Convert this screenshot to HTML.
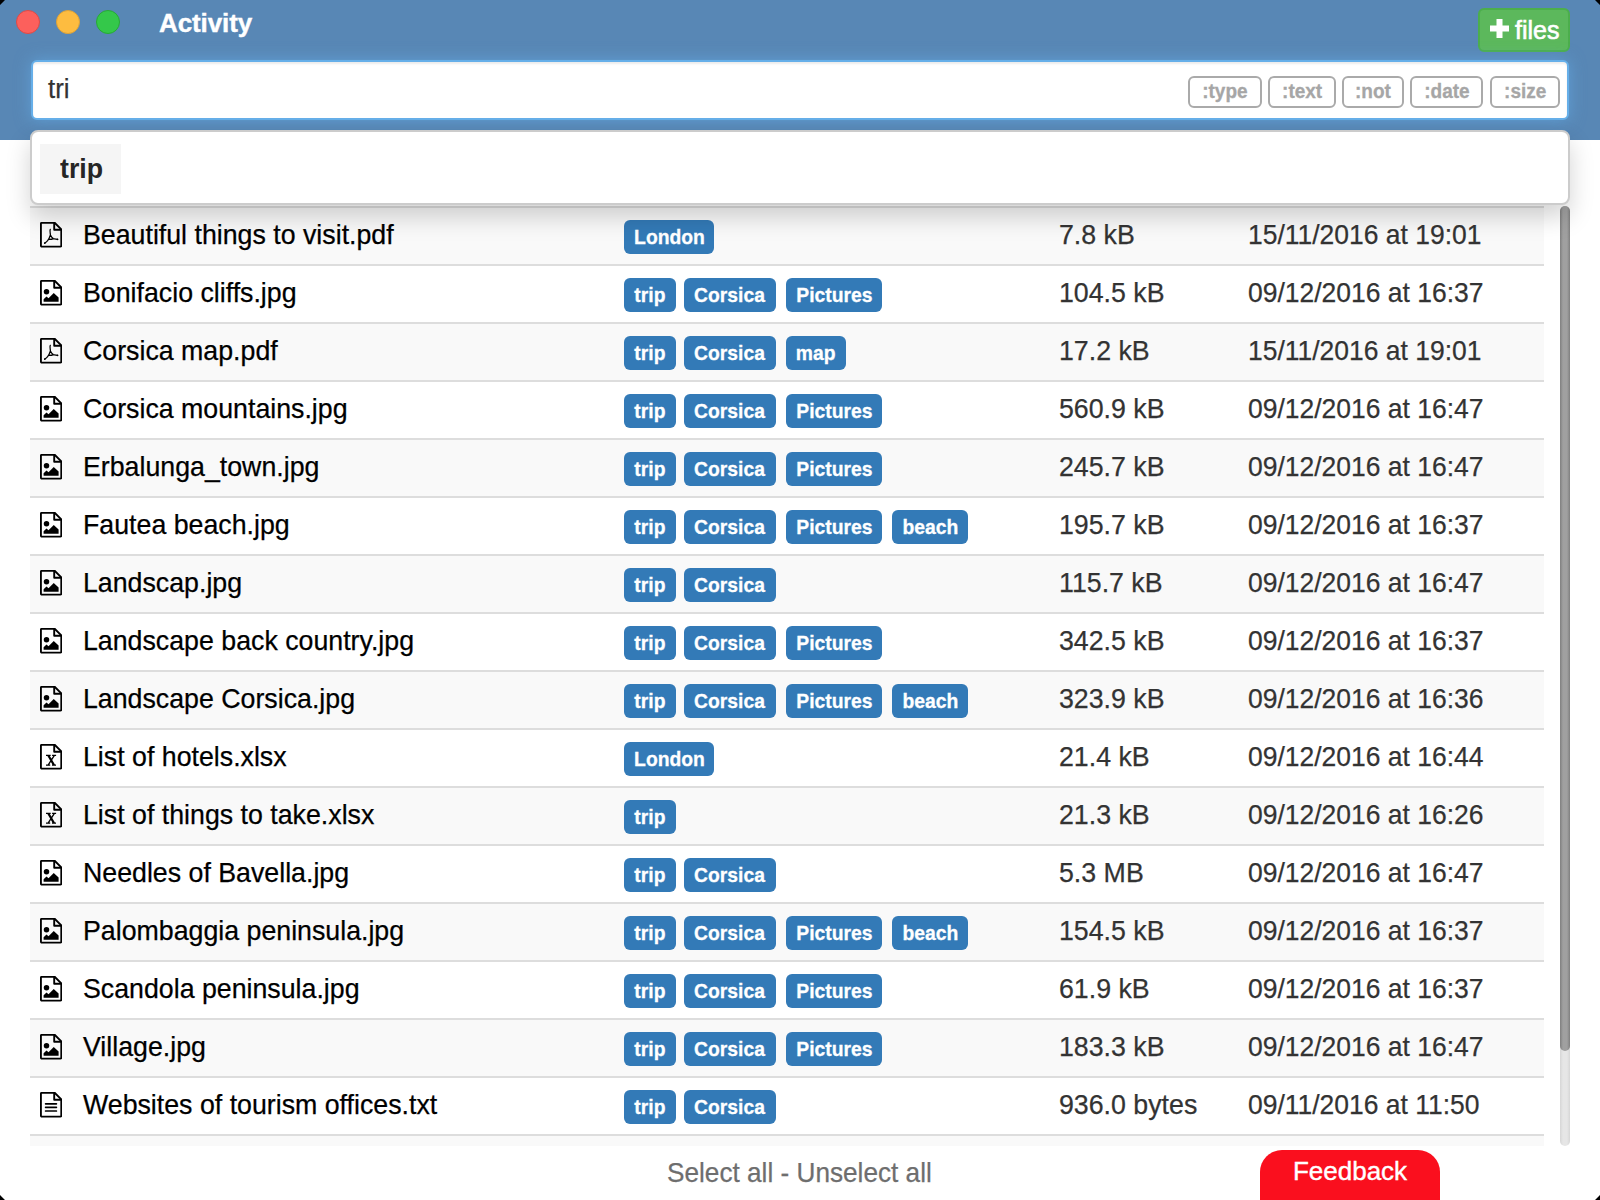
<!DOCTYPE html>
<html><head><meta charset="utf-8"><title>Activity</title>
<style>
html,body{margin:0;padding:0;}
body{width:1600px;height:1200px;overflow:hidden;position:relative;background:#fff;font-family:"Liberation Sans",sans-serif;color:#333;}
.header{position:absolute;left:0;top:0;width:1600px;height:140px;background:#5887b5;}
.tl{position:absolute;top:10px;width:22px;height:22px;border-radius:50%;border:1px solid;}
.title{position:absolute;left:159px;top:6px;font-size:26px;font-weight:bold;color:#fff;line-height:34px;-webkit-text-stroke:0.4px #fff;letter-spacing:-0.1px;}
.addbtn{position:absolute;left:1478px;top:8px;width:88px;height:40px;border:2px solid #4cae4c;background:#5cb85c;border-radius:6px;color:#fff;}
.addbtn .plus{position:absolute;left:9.5px;top:8.5px;width:19px;height:19px;}
.addbtn .files{position:absolute;left:35px;top:5px;font-size:25px;line-height:30px;-webkit-text-stroke:0.6px #fff;}
.search{position:absolute;left:31px;top:60px;width:1534px;height:56px;background:#fff;border:2px solid #66afe9;border-radius:6px;box-shadow:inset 0 2px 2px rgba(0,0,0,.075),0 0 16px rgba(102,175,233,.6);}
.search .q{position:absolute;left:15px;top:12px;font-size:27px;line-height:30px;color:#333;}
.chip{position:absolute;top:14px;height:28px;border:2px solid #aaa;border-radius:6px;color:#a6a6a6;font-weight:bold;font-size:20px;line-height:26px;text-align:center;box-sizing:content-box;-webkit-text-stroke:0.3px #a6a6a6;}
.dropdown{position:absolute;left:30px;top:130px;width:1536px;height:71px;background:#fff;border:2px solid #ccc;border-radius:8px;box-shadow:0 12px 24px rgba(0,0,0,.175);z-index:5;}
.dropdown .item{position:absolute;left:8px;top:12px;width:81px;height:50px;background:#f5f5f5;}
.dropdown .item span{position:absolute;left:20px;top:10px;font-size:28px;font-weight:bold;color:#262626;line-height:30px;}
.row{position:absolute;left:30px;width:1514px;height:56px;border-top:2px solid #ddd;}
.footer i{font-style:normal;display:inline-block;transform:scaleX(.935);transform-origin:0 0;-webkit-text-stroke:0.25px currentColor;}
.date i{font-style:normal;display:inline-block;transform:scaleX(.945);transform-origin:0 0;}
.chip i{font-style:normal;display:inline-block;transform:scaleX(.95);}
.name i,.size i,.date i,.q i{-webkit-text-stroke:0.25px currentColor;}
.name i,.size i,.q i,.item i{font-style:normal;display:inline-block;transform:scaleX(.955);transform-origin:0 0;}
.ic{position:absolute;left:10px;top:14px;}
.name{position:absolute;left:53px;top:11px;font-size:28px;line-height:32px;color:#000;white-space:nowrap;}
.tags{position:absolute;left:594px;top:12px;height:34px;white-space:nowrap;font-size:0;}
.tag{position:absolute;top:0;height:34px;background:#337ab7;border-radius:6px;color:#fff;font-weight:bold;font-size:21px;line-height:34px;text-align:center;}
.tag i{font-style:normal;display:inline-block;transform:scaleX(.92);-webkit-text-stroke:0.3px #fff;}
.size{position:absolute;left:1029px;top:11px;font-size:28px;line-height:32px;white-space:nowrap;}
.date{position:absolute;left:1218px;top:11px;font-size:28px;line-height:32px;white-space:nowrap;}
.sb-track{position:absolute;left:1560px;top:206px;width:10px;height:940px;border-radius:5px;background:linear-gradient(90deg,#d6d6d6,#e6e6e6 30%,#e6e6e6 70%,#d6d6d6);}
.sb-thumb{position:absolute;left:1560px;top:206px;width:10px;height:845px;border-radius:5px;background:linear-gradient(90deg,#7f7f7f,#a0a0a0 30%,#a0a0a0 70%,#7f7f7f);}
.footer{position:absolute;left:667px;top:1155px;white-space:nowrap;font-size:28px;line-height:36px;color:#6e6e6e;}
.feedback{position:absolute;left:1260px;top:1150px;width:180px;height:70px;background:#fa0f1e;border-radius:22px 22px 0 0;color:#fff;font-size:26px;text-align:center;line-height:42px;-webkit-text-stroke:0.4px #fff;}
</style></head>
<body>
<div class="header">
  <div class="tl" style="left:16px;background:#fc605c;border-color:#de4a46"></div>
  <div class="tl" style="left:56px;background:#fdbc40;border-color:#dea236"></div>
  <div class="tl" style="left:96px;background:#34c84a;border-color:#27aa35"></div>
  <div class="title">Activity</div>
  <div class="addbtn"><svg class="plus" viewBox="0 0 19 19"><path d="M9.5,0 V19 M0,9.5 H19" stroke="#fff" stroke-width="6"/></svg><span class="files">files</span></div>
</div>
<div class="search">
  <div class="q"><i>tri</i></div>
  <div class="chip" style="left:1155px;width:70px"><i>:type</i></div>
  <div class="chip" style="left:1235px;width:64px"><i>:text</i></div>
  <div class="chip" style="left:1309px;width:58px"><i>:not</i></div>
  <div class="chip" style="left:1377px;width:69px"><i>:date</i></div>
  <div class="chip" style="left:1457px;width:66px"><i>:size</i></div>
</div>
<div class="dropdown"><div class="item"><span><i>trip</i></span></div></div>
<div class="table">
<div class="row" style="top:206px;background:#f9f9f9"><svg class="ic" width="22" height="26" viewBox="0 0 22 26"><path d="M1.9,0.75 H14.6 L21.3,7.4 V23.6 Q21.3,24.6 20.3,24.6 H1.9 Q0.9,24.6 0.9,23.6 V1.75 Q0.9,0.75 1.9,0.75 Z" fill="none" stroke="#000" stroke-width="1.9" stroke-linejoin="round"/><path d="M14.2,0.75 V7.8 H21.3" fill="none" stroke="#000" stroke-width="1.9" stroke-linejoin="round"/><path d="M10.3,7.3 C9.5,8.8 10.4,11 10.4,13 M10.4,13 C9.8,15 8.8,17.3 7.6,18.6 C6.6,19.8 5.5,20.6 4.7,21.2 M10.4,13 C11.2,14.6 12.2,16 13.4,16.6 C14.8,17.1 16.4,17 17.6,17.3 M8.6,17.3 C10,17.6 11.8,17.3 13.4,16.6" fill="none" stroke="#000" stroke-width="1.25" stroke-linecap="round"/><circle cx="17.5" cy="17.3" r="0.85" fill="#000"/><circle cx="4.8" cy="21.1" r="0.85" fill="#000"/></svg><div class="name"><i>Beautiful things to visit.pdf</i></div><div class="tags"><span class="tag" style="left:0px;width:90px"><i>London</i></span></div><div class="size"><i>7.8 kB</i></div><div class="date"><i>15/11/2016 at 19:01</i></div></div>
<div class="row" style="top:264px;background:#fff"><svg class="ic" width="22" height="26" viewBox="0 0 22 26"><path d="M1.9,0.75 H14.6 L21.3,7.4 V23.6 Q21.3,24.6 20.3,24.6 H1.9 Q0.9,24.6 0.9,23.6 V1.75 Q0.9,0.75 1.9,0.75 Z" fill="none" stroke="#000" stroke-width="1.9" stroke-linejoin="round"/><path d="M14.2,0.75 V7.8 H21.3" fill="none" stroke="#000" stroke-width="1.9" stroke-linejoin="round"/><circle cx="6.5" cy="11.75" r="2.75" fill="#000"/><path d="M3.6,21.75 V19.25 L6.5,16.5 L8.5,18.25 L13.75,13 L18.6,17.6 V21.75 Z" fill="#000"/></svg><div class="name"><i>Bonifacio cliffs.jpg</i></div><div class="tags"><span class="tag" style="left:0px;width:52px"><i>trip</i></span><span class="tag" style="left:60px;width:92px"><i>Corsica</i></span><span class="tag" style="left:162px;width:96px"><i>Pictures</i></span></div><div class="size"><i>104.5 kB</i></div><div class="date"><i>09/12/2016 at 16:37</i></div></div>
<div class="row" style="top:322px;background:#f9f9f9"><svg class="ic" width="22" height="26" viewBox="0 0 22 26"><path d="M1.9,0.75 H14.6 L21.3,7.4 V23.6 Q21.3,24.6 20.3,24.6 H1.9 Q0.9,24.6 0.9,23.6 V1.75 Q0.9,0.75 1.9,0.75 Z" fill="none" stroke="#000" stroke-width="1.9" stroke-linejoin="round"/><path d="M14.2,0.75 V7.8 H21.3" fill="none" stroke="#000" stroke-width="1.9" stroke-linejoin="round"/><path d="M10.3,7.3 C9.5,8.8 10.4,11 10.4,13 M10.4,13 C9.8,15 8.8,17.3 7.6,18.6 C6.6,19.8 5.5,20.6 4.7,21.2 M10.4,13 C11.2,14.6 12.2,16 13.4,16.6 C14.8,17.1 16.4,17 17.6,17.3 M8.6,17.3 C10,17.6 11.8,17.3 13.4,16.6" fill="none" stroke="#000" stroke-width="1.25" stroke-linecap="round"/><circle cx="17.5" cy="17.3" r="0.85" fill="#000"/><circle cx="4.8" cy="21.1" r="0.85" fill="#000"/></svg><div class="name"><i>Corsica map.pdf</i></div><div class="tags"><span class="tag" style="left:0px;width:52px"><i>trip</i></span><span class="tag" style="left:60px;width:92px"><i>Corsica</i></span><span class="tag" style="left:162px;width:60px"><i>map</i></span></div><div class="size"><i>17.2 kB</i></div><div class="date"><i>15/11/2016 at 19:01</i></div></div>
<div class="row" style="top:380px;background:#fff"><svg class="ic" width="22" height="26" viewBox="0 0 22 26"><path d="M1.9,0.75 H14.6 L21.3,7.4 V23.6 Q21.3,24.6 20.3,24.6 H1.9 Q0.9,24.6 0.9,23.6 V1.75 Q0.9,0.75 1.9,0.75 Z" fill="none" stroke="#000" stroke-width="1.9" stroke-linejoin="round"/><path d="M14.2,0.75 V7.8 H21.3" fill="none" stroke="#000" stroke-width="1.9" stroke-linejoin="round"/><circle cx="6.5" cy="11.75" r="2.75" fill="#000"/><path d="M3.6,21.75 V19.25 L6.5,16.5 L8.5,18.25 L13.75,13 L18.6,17.6 V21.75 Z" fill="#000"/></svg><div class="name"><i>Corsica mountains.jpg</i></div><div class="tags"><span class="tag" style="left:0px;width:52px"><i>trip</i></span><span class="tag" style="left:60px;width:92px"><i>Corsica</i></span><span class="tag" style="left:162px;width:96px"><i>Pictures</i></span></div><div class="size"><i>560.9 kB</i></div><div class="date"><i>09/12/2016 at 16:47</i></div></div>
<div class="row" style="top:438px;background:#f9f9f9"><svg class="ic" width="22" height="26" viewBox="0 0 22 26"><path d="M1.9,0.75 H14.6 L21.3,7.4 V23.6 Q21.3,24.6 20.3,24.6 H1.9 Q0.9,24.6 0.9,23.6 V1.75 Q0.9,0.75 1.9,0.75 Z" fill="none" stroke="#000" stroke-width="1.9" stroke-linejoin="round"/><path d="M14.2,0.75 V7.8 H21.3" fill="none" stroke="#000" stroke-width="1.9" stroke-linejoin="round"/><circle cx="6.5" cy="11.75" r="2.75" fill="#000"/><path d="M3.6,21.75 V19.25 L6.5,16.5 L8.5,18.25 L13.75,13 L18.6,17.6 V21.75 Z" fill="#000"/></svg><div class="name"><i>Erbalunga_town.jpg</i></div><div class="tags"><span class="tag" style="left:0px;width:52px"><i>trip</i></span><span class="tag" style="left:60px;width:92px"><i>Corsica</i></span><span class="tag" style="left:162px;width:96px"><i>Pictures</i></span></div><div class="size"><i>245.7 kB</i></div><div class="date"><i>09/12/2016 at 16:47</i></div></div>
<div class="row" style="top:496px;background:#fff"><svg class="ic" width="22" height="26" viewBox="0 0 22 26"><path d="M1.9,0.75 H14.6 L21.3,7.4 V23.6 Q21.3,24.6 20.3,24.6 H1.9 Q0.9,24.6 0.9,23.6 V1.75 Q0.9,0.75 1.9,0.75 Z" fill="none" stroke="#000" stroke-width="1.9" stroke-linejoin="round"/><path d="M14.2,0.75 V7.8 H21.3" fill="none" stroke="#000" stroke-width="1.9" stroke-linejoin="round"/><circle cx="6.5" cy="11.75" r="2.75" fill="#000"/><path d="M3.6,21.75 V19.25 L6.5,16.5 L8.5,18.25 L13.75,13 L18.6,17.6 V21.75 Z" fill="#000"/></svg><div class="name"><i>Fautea beach.jpg</i></div><div class="tags"><span class="tag" style="left:0px;width:52px"><i>trip</i></span><span class="tag" style="left:60px;width:92px"><i>Corsica</i></span><span class="tag" style="left:162px;width:96px"><i>Pictures</i></span><span class="tag" style="left:268px;width:76px"><i>beach</i></span></div><div class="size"><i>195.7 kB</i></div><div class="date"><i>09/12/2016 at 16:37</i></div></div>
<div class="row" style="top:554px;background:#f9f9f9"><svg class="ic" width="22" height="26" viewBox="0 0 22 26"><path d="M1.9,0.75 H14.6 L21.3,7.4 V23.6 Q21.3,24.6 20.3,24.6 H1.9 Q0.9,24.6 0.9,23.6 V1.75 Q0.9,0.75 1.9,0.75 Z" fill="none" stroke="#000" stroke-width="1.9" stroke-linejoin="round"/><path d="M14.2,0.75 V7.8 H21.3" fill="none" stroke="#000" stroke-width="1.9" stroke-linejoin="round"/><circle cx="6.5" cy="11.75" r="2.75" fill="#000"/><path d="M3.6,21.75 V19.25 L6.5,16.5 L8.5,18.25 L13.75,13 L18.6,17.6 V21.75 Z" fill="#000"/></svg><div class="name"><i>Landscap.jpg</i></div><div class="tags"><span class="tag" style="left:0px;width:52px"><i>trip</i></span><span class="tag" style="left:60px;width:92px"><i>Corsica</i></span></div><div class="size"><i>115.7 kB</i></div><div class="date"><i>09/12/2016 at 16:47</i></div></div>
<div class="row" style="top:612px;background:#fff"><svg class="ic" width="22" height="26" viewBox="0 0 22 26"><path d="M1.9,0.75 H14.6 L21.3,7.4 V23.6 Q21.3,24.6 20.3,24.6 H1.9 Q0.9,24.6 0.9,23.6 V1.75 Q0.9,0.75 1.9,0.75 Z" fill="none" stroke="#000" stroke-width="1.9" stroke-linejoin="round"/><path d="M14.2,0.75 V7.8 H21.3" fill="none" stroke="#000" stroke-width="1.9" stroke-linejoin="round"/><circle cx="6.5" cy="11.75" r="2.75" fill="#000"/><path d="M3.6,21.75 V19.25 L6.5,16.5 L8.5,18.25 L13.75,13 L18.6,17.6 V21.75 Z" fill="#000"/></svg><div class="name"><i>Landscape back country.jpg</i></div><div class="tags"><span class="tag" style="left:0px;width:52px"><i>trip</i></span><span class="tag" style="left:60px;width:92px"><i>Corsica</i></span><span class="tag" style="left:162px;width:96px"><i>Pictures</i></span></div><div class="size"><i>342.5 kB</i></div><div class="date"><i>09/12/2016 at 16:37</i></div></div>
<div class="row" style="top:670px;background:#f9f9f9"><svg class="ic" width="22" height="26" viewBox="0 0 22 26"><path d="M1.9,0.75 H14.6 L21.3,7.4 V23.6 Q21.3,24.6 20.3,24.6 H1.9 Q0.9,24.6 0.9,23.6 V1.75 Q0.9,0.75 1.9,0.75 Z" fill="none" stroke="#000" stroke-width="1.9" stroke-linejoin="round"/><path d="M14.2,0.75 V7.8 H21.3" fill="none" stroke="#000" stroke-width="1.9" stroke-linejoin="round"/><circle cx="6.5" cy="11.75" r="2.75" fill="#000"/><path d="M3.6,21.75 V19.25 L6.5,16.5 L8.5,18.25 L13.75,13 L18.6,17.6 V21.75 Z" fill="#000"/></svg><div class="name"><i>Landscape Corsica.jpg</i></div><div class="tags"><span class="tag" style="left:0px;width:52px"><i>trip</i></span><span class="tag" style="left:60px;width:92px"><i>Corsica</i></span><span class="tag" style="left:162px;width:96px"><i>Pictures</i></span><span class="tag" style="left:268px;width:76px"><i>beach</i></span></div><div class="size"><i>323.9 kB</i></div><div class="date"><i>09/12/2016 at 16:36</i></div></div>
<div class="row" style="top:728px;background:#fff"><svg class="ic" width="22" height="26" viewBox="0 0 22 26"><path d="M1.9,0.75 H14.6 L21.3,7.4 V23.6 Q21.3,24.6 20.3,24.6 H1.9 Q0.9,24.6 0.9,23.6 V1.75 Q0.9,0.75 1.9,0.75 Z" fill="none" stroke="#000" stroke-width="1.9" stroke-linejoin="round"/><path d="M14.2,0.75 V7.8 H21.3" fill="none" stroke="#000" stroke-width="1.9" stroke-linejoin="round"/><path d="M6,10.7 H10.7 V12 H6 Z M12.1,10.7 H16.1 V12 H12.1 Z M6,20.5 H10.2 V21.8 H6 Z M12,20.5 H16 V21.8 H12 Z M7.4,12 H9.9 L14.9,20.5 H12.4 Z M13.2,12 H14.8 L9.3,20.5 H7.7 Z" fill="#000"/></svg><div class="name"><i>List of hotels.xlsx</i></div><div class="tags"><span class="tag" style="left:0px;width:90px"><i>London</i></span></div><div class="size"><i>21.4 kB</i></div><div class="date"><i>09/12/2016 at 16:44</i></div></div>
<div class="row" style="top:786px;background:#f9f9f9"><svg class="ic" width="22" height="26" viewBox="0 0 22 26"><path d="M1.9,0.75 H14.6 L21.3,7.4 V23.6 Q21.3,24.6 20.3,24.6 H1.9 Q0.9,24.6 0.9,23.6 V1.75 Q0.9,0.75 1.9,0.75 Z" fill="none" stroke="#000" stroke-width="1.9" stroke-linejoin="round"/><path d="M14.2,0.75 V7.8 H21.3" fill="none" stroke="#000" stroke-width="1.9" stroke-linejoin="round"/><path d="M6,10.7 H10.7 V12 H6 Z M12.1,10.7 H16.1 V12 H12.1 Z M6,20.5 H10.2 V21.8 H6 Z M12,20.5 H16 V21.8 H12 Z M7.4,12 H9.9 L14.9,20.5 H12.4 Z M13.2,12 H14.8 L9.3,20.5 H7.7 Z" fill="#000"/></svg><div class="name"><i>List of things to take.xlsx</i></div><div class="tags"><span class="tag" style="left:0px;width:52px"><i>trip</i></span></div><div class="size"><i>21.3 kB</i></div><div class="date"><i>09/12/2016 at 16:26</i></div></div>
<div class="row" style="top:844px;background:#fff"><svg class="ic" width="22" height="26" viewBox="0 0 22 26"><path d="M1.9,0.75 H14.6 L21.3,7.4 V23.6 Q21.3,24.6 20.3,24.6 H1.9 Q0.9,24.6 0.9,23.6 V1.75 Q0.9,0.75 1.9,0.75 Z" fill="none" stroke="#000" stroke-width="1.9" stroke-linejoin="round"/><path d="M14.2,0.75 V7.8 H21.3" fill="none" stroke="#000" stroke-width="1.9" stroke-linejoin="round"/><circle cx="6.5" cy="11.75" r="2.75" fill="#000"/><path d="M3.6,21.75 V19.25 L6.5,16.5 L8.5,18.25 L13.75,13 L18.6,17.6 V21.75 Z" fill="#000"/></svg><div class="name"><i>Needles of Bavella.jpg</i></div><div class="tags"><span class="tag" style="left:0px;width:52px"><i>trip</i></span><span class="tag" style="left:60px;width:92px"><i>Corsica</i></span></div><div class="size"><i>5.3 MB</i></div><div class="date"><i>09/12/2016 at 16:47</i></div></div>
<div class="row" style="top:902px;background:#f9f9f9"><svg class="ic" width="22" height="26" viewBox="0 0 22 26"><path d="M1.9,0.75 H14.6 L21.3,7.4 V23.6 Q21.3,24.6 20.3,24.6 H1.9 Q0.9,24.6 0.9,23.6 V1.75 Q0.9,0.75 1.9,0.75 Z" fill="none" stroke="#000" stroke-width="1.9" stroke-linejoin="round"/><path d="M14.2,0.75 V7.8 H21.3" fill="none" stroke="#000" stroke-width="1.9" stroke-linejoin="round"/><circle cx="6.5" cy="11.75" r="2.75" fill="#000"/><path d="M3.6,21.75 V19.25 L6.5,16.5 L8.5,18.25 L13.75,13 L18.6,17.6 V21.75 Z" fill="#000"/></svg><div class="name"><i>Palombaggia peninsula.jpg</i></div><div class="tags"><span class="tag" style="left:0px;width:52px"><i>trip</i></span><span class="tag" style="left:60px;width:92px"><i>Corsica</i></span><span class="tag" style="left:162px;width:96px"><i>Pictures</i></span><span class="tag" style="left:268px;width:76px"><i>beach</i></span></div><div class="size"><i>154.5 kB</i></div><div class="date"><i>09/12/2016 at 16:37</i></div></div>
<div class="row" style="top:960px;background:#fff"><svg class="ic" width="22" height="26" viewBox="0 0 22 26"><path d="M1.9,0.75 H14.6 L21.3,7.4 V23.6 Q21.3,24.6 20.3,24.6 H1.9 Q0.9,24.6 0.9,23.6 V1.75 Q0.9,0.75 1.9,0.75 Z" fill="none" stroke="#000" stroke-width="1.9" stroke-linejoin="round"/><path d="M14.2,0.75 V7.8 H21.3" fill="none" stroke="#000" stroke-width="1.9" stroke-linejoin="round"/><circle cx="6.5" cy="11.75" r="2.75" fill="#000"/><path d="M3.6,21.75 V19.25 L6.5,16.5 L8.5,18.25 L13.75,13 L18.6,17.6 V21.75 Z" fill="#000"/></svg><div class="name"><i>Scandola peninsula.jpg</i></div><div class="tags"><span class="tag" style="left:0px;width:52px"><i>trip</i></span><span class="tag" style="left:60px;width:92px"><i>Corsica</i></span><span class="tag" style="left:162px;width:96px"><i>Pictures</i></span></div><div class="size"><i>61.9 kB</i></div><div class="date"><i>09/12/2016 at 16:37</i></div></div>
<div class="row" style="top:1018px;background:#f9f9f9"><svg class="ic" width="22" height="26" viewBox="0 0 22 26"><path d="M1.9,0.75 H14.6 L21.3,7.4 V23.6 Q21.3,24.6 20.3,24.6 H1.9 Q0.9,24.6 0.9,23.6 V1.75 Q0.9,0.75 1.9,0.75 Z" fill="none" stroke="#000" stroke-width="1.9" stroke-linejoin="round"/><path d="M14.2,0.75 V7.8 H21.3" fill="none" stroke="#000" stroke-width="1.9" stroke-linejoin="round"/><circle cx="6.5" cy="11.75" r="2.75" fill="#000"/><path d="M3.6,21.75 V19.25 L6.5,16.5 L8.5,18.25 L13.75,13 L18.6,17.6 V21.75 Z" fill="#000"/></svg><div class="name"><i>Village.jpg</i></div><div class="tags"><span class="tag" style="left:0px;width:52px"><i>trip</i></span><span class="tag" style="left:60px;width:92px"><i>Corsica</i></span><span class="tag" style="left:162px;width:96px"><i>Pictures</i></span></div><div class="size"><i>183.3 kB</i></div><div class="date"><i>09/12/2016 at 16:47</i></div></div>
<div class="row" style="top:1076px;background:#fff"><svg class="ic" width="22" height="26" viewBox="0 0 22 26"><path d="M1.9,0.75 H14.6 L21.3,7.4 V23.6 Q21.3,24.6 20.3,24.6 H1.9 Q0.9,24.6 0.9,23.6 V1.75 Q0.9,0.75 1.9,0.75 Z" fill="none" stroke="#000" stroke-width="1.9" stroke-linejoin="round"/><path d="M14.2,0.75 V7.8 H21.3" fill="none" stroke="#000" stroke-width="1.9" stroke-linejoin="round"/><path d="M5.6,11.8 H16.4 M5.6,15.35 H16.4 M5.6,19 H16.4" fill="none" stroke="#000" stroke-width="1.7" stroke-linecap="round"/></svg><div class="name"><i>Websites of tourism offices.txt</i></div><div class="tags"><span class="tag" style="left:0px;width:52px"><i>trip</i></span><span class="tag" style="left:60px;width:92px"><i>Corsica</i></span></div><div class="size"><i>936.0 bytes</i></div><div class="date"><i>09/11/2016 at 11:50</i></div></div>
<div class="row" style="top:1134px;background:#f9f9f9;height:10px;"></div>
</div>
<div class="sb-track"></div>
<div class="sb-thumb"></div>
<div class="footer"><i>Select all - Unselect all</i></div>
<div class="feedback">Feedback</div>
<svg style="position:absolute;left:0;top:0;z-index:20" width="1600" height="1200"><path d="M0,0 H5 L0,5 Z M1600,0 V5 L1595,0 Z M0,1200 V1195 L5,1200 Z M1600,1200 H1595 L1600,1195 Z" fill="#000"/></svg>
</body></html>
